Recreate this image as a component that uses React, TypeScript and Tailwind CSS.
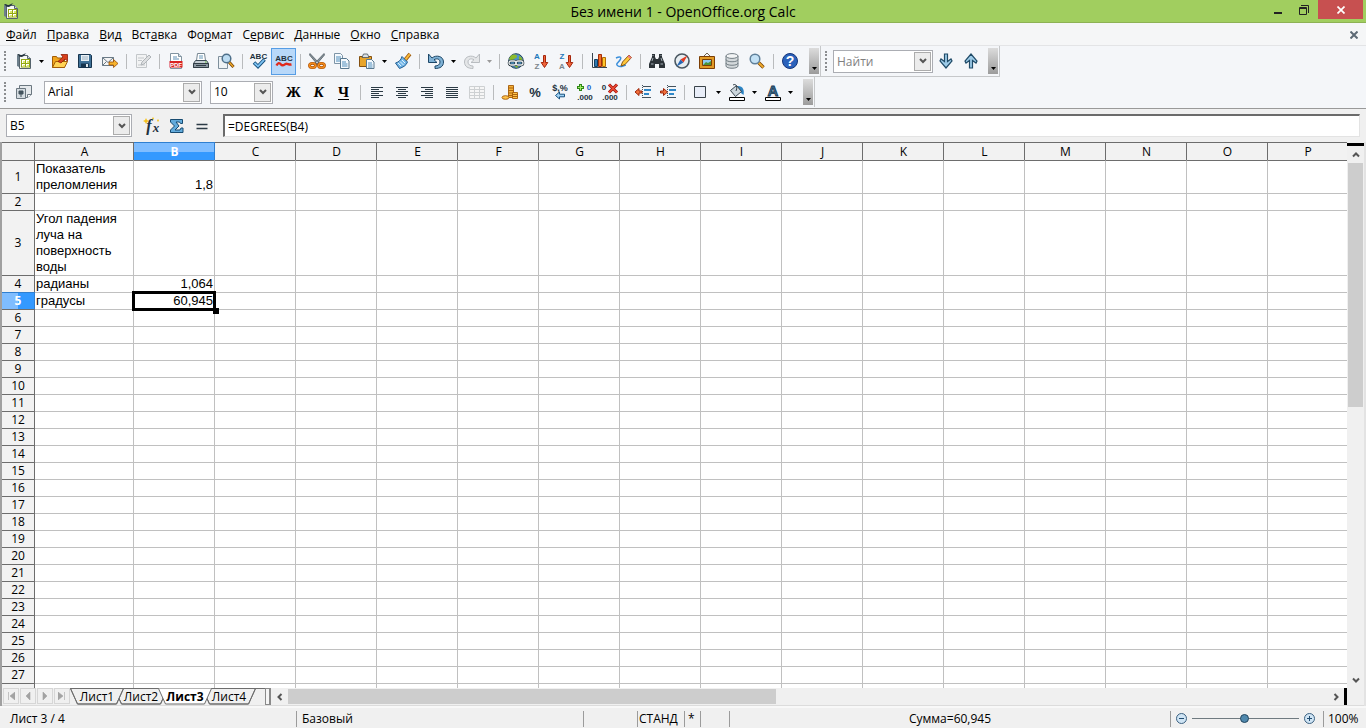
import React from 'react';

interface IconProps {
  children: React.ReactNode;
  size?: number;
}

const Icon: React.FC<IconProps> = ({ children, size = 16 }) => (
  <svg
    width={size}
    height={size}
    viewBox="0 0 16 16"
    fill="none"
    className="shrink-0 overflow-visible font-['Liberation_Sans',sans-serif]"
    aria-hidden="true"
  >
    {children}
  </svg>
);

const CalcIcon = () => (
  <Icon>
    <path d="M1 2l2 .5V14l-2-1z" fill="#6d7f8b" />
    <path d="M3.500 2.500h8l3 3v10h-11z" fill="#f7f9f4" stroke="#55636c" />
    <path d="M11.500 2.500v3h3" fill="#cfd8dc" stroke="#55636c" />
    <path d="M1 1.500c1.500-1.500 3 .5 4.500.5S8 0 10.500.5C8.500 1 8 4 5.500 4S3 2.500 1 1.500z" fill="#24343f" />
    <path d="M5 6h9v8.500H5z" fill="#93a814" />
    <path d="M6 7h3v3H6zM10 7h3v3h-3zM6 11h3v2.500H6zM10 11h3v2.500h-3z" fill="#fff" />
    <path d="M7 8h2v2H7zM11 8h2v2h-2zM7 12h2v1.500H7zM11 12h2v1.500h-2z" fill="#dbe86a" />
  </Icon>
);

const OpenIcon = () => (
  <Icon>
    <path d="M.5 14.500v-11h4l1 1.500h7v9.500z" fill="#f0a51c" stroke="#a35c06" />
    <path d="M.5 14.500l3-6h12l-3 6z" fill="#ffd354" stroke="#a35c06" />
    <path d="M6 8.500l5-4.500-2-2.500h6.500V8l-2.500-2-4 4z" fill="#d8401c" stroke="#8e1d08" strokeWidth=".8" />
  </Icon>
);

const SaveIcon = () => (
  <Icon>
    <path d="M1.500 1.500h12l1 1v12h-13z" fill="#3f7197" stroke="#16344e" />
    <path d="M4 2h8v6H4z" fill="#e9f0f5" />
    <path d="M5 4h6M5 6h6" stroke="#9db2c2" />
    <path d="M4 10.500h8V14H4z" fill="#16344e" />
    <path d="M9 11h2v3H9z" fill="#dfe8ee" />
  </Icon>
);

const MailIcon = () => (
  <Icon>
    <path d="M.5 4.500h11v8H.5z" fill="#f4f4f4" stroke="#6a7a86" />
    <path d="M.5 4.500L6 9.500l5.500-5M.5 12.500l4-4M11.500 12.500l-4-4" stroke="#6a7a86" />
    <path d="M7 9h4.500V6.500L16 10.500l-4.500 4V12H7z" fill="#f7b42c" stroke="#9c4d05" strokeWidth=".8" />
  </Icon>
);

const EditIcon = () => (
  <Icon>
    <path d="M1.500 1.500h10v13h-10z" fill="#f2f3f4" stroke="#c3c7ca" />
    <path d="M3 5h6M3 7.500h4M3 12h7" stroke="#c3c7ca" />
    <path d="M14 2l2 2-7 7-3 1 1-3z" fill="#dddfe1" stroke="#afb4b8" />
  </Icon>
);

const PdfIcon = () => (
  <Icon>
    <path d="M2.500.5h8l3 3v12h-11z" fill="#fff" stroke="#8294a1" />
    <path d="M10.500.5v3h3" fill="#d4e2ec" stroke="#8294a1" />
    <path d="M5 4h4M5 6h6" stroke="#5e8fb5" />
    <path d="M1.500 8h13v6.500h-13z" fill="#d92222" />
    <text x="8" y="13.500" textAnchor="middle" fontSize="6" fontWeight="700" fill="#fff">PDF</text>
  </Icon>
);

const PrintIcon = () => (
  <Icon>
    <path d="M4.500.5h7l1 7h-9z" fill="#fff" stroke="#778793" />
    <path d="M6 3h4M6 5h4" stroke="#6697b8" />
    <path d="M2.500 7.500h11l2 3v4H.5v-4z" fill="#c6ced4" stroke="#3c4a54" />
    <path d="M.5 10.500h15v4H.5z" fill="#8a969f" stroke="#303c45" />
    <path d="M3 12.500h10" stroke="#303c45" />
    <path d="M12 9h1.500" stroke="#5dbf2f" />
  </Icon>
);

const PreviewIcon = () => (
  <Icon>
    <path d="M.5 3.500h9v12h-9z" fill="#eef2f5" stroke="#7e8f9c" />
    <path d="M11 9l4.500 5" stroke="#6d3c06" strokeWidth="3" />
    <path d="M11 9l4.300 4.800" stroke="#efa929" strokeWidth="1.500" />
    <circle cx="8.500" cy="5.500" r="4.300" fill="#bcdcf2" stroke="#4e6f8a" strokeWidth="1.500" />
  </Icon>
);

const SpellIcon = () => (
  <Icon>
    <text x="7.500" y="6" textAnchor="middle" fontSize="8" fontWeight="700" fill="#22313d">ABC</text>
    <path d="M3 9.500l4 4 6.500-7" stroke="#17517f" strokeWidth="3.600" />
    <path d="M3.500 10l3.500 3.300 6-6.500" stroke="#7ec3f3" strokeWidth="1.800" />
  </Icon>
);

const AutoSpellIcon = () => (
  <Icon>
    <text x="8" y="7.500" textAnchor="middle" fontSize="8" fontWeight="700" fill="#22313d">ABC</text>
    <path d="M.5 12.500c1.500-3 3-3 4.500-1s3 .5 4.500-.5 3 1 6 .5" stroke="#e02a1c" strokeWidth="2.400" />
  </Icon>
);

const CutIcon = () => (
  <Icon>
    <path d="M1 .5l10 10.500-2 1L.5 2zM15 .5L5 11l2 1L15.500 2z" fill="#87929a" stroke="#46515a" strokeWidth=".7" />
    <ellipse cx="3.500" cy="12.500" rx="3" ry="2.200" stroke="#a84c04" strokeWidth="2.800" />
    <ellipse cx="12.500" cy="12.500" rx="3" ry="2.200" stroke="#a84c04" strokeWidth="2.800" />
    <ellipse cx="3.500" cy="12.500" rx="3" ry="2.200" stroke="#f28b1b" strokeWidth="1.600" />
    <ellipse cx="12.500" cy="12.500" rx="3" ry="2.200" stroke="#f28b1b" strokeWidth="1.600" />
  </Icon>
);

const CopyIcon = () => (
  <Icon>
    <path d="M.5.5h6l2 2v8h-8z" fill="#f4f9fd" stroke="#7d94a6" />
    <path d="M2 4h5M2 6h5M2 8h5" stroke="#4f8dbb" />
    <path d="M6.500 5.500h6l2.500 2.500v7.500H6.500z" fill="#f4f9fd" stroke="#58788f" />
    <path d="M8 9h4M8 11h5.500M8 13h5.500" stroke="#4f8dbb" />
  </Icon>
);

const PasteIcon = () => (
  <Icon>
    <path d="M.5 3.500h12v10H.5z" fill="#e8a52b" stroke="#845010" />
    <path d="M3 4.500h7L8.500 1h-4z" fill="#dbe1e5" stroke="#4a545c" strokeWidth=".8" />
    <path d="M7.500 6.500h5l2.500 2.500v6.500H7.500z" fill="#f4f9fd" stroke="#58788f" />
    <path d="M9 10h4M9 12h4.500M9 14h4.500" stroke="#4f8dbb" />
  </Icon>
);

const BrushIcon = () => (
  <Icon>
    <path d="M10 7l5-6" stroke="#99560c" strokeWidth="3.600" />
    <path d="M10 7l4.800-5.800" stroke="#f8b83a" strokeWidth="2" />
    <path d="M7 3.500l5.500 5.500C11 13 8 14 4.500 15.500L.5 10C4 9 6 7 7 3.500z" fill="#72b5e6" stroke="#235e91" />
    <path d="M3 10l3 3M5 8.500l3.500 3.500M7 7l3 3" stroke="#e4f3fc" />
  </Icon>
);

const UndoIcon = () => (
  <Icon>
    <path d="M.5 1v8.500H9L6 6.700c3-1.700 6-.7 6 2.300 0 2.500-2 4-5 4v2.500c5 0 8.500-2 8.500-6.500 0-6-7.500-7.500-11.500-4z" fill="#7fb2d6" stroke="#1d4768" />
  </Icon>
);

const RedoIcon = () => (
  <Icon>
    <path d="M15.500 1v8.500H7L10 6.700C7 5 4 6 4 9c0 2.500 2 4 5 4v2.500C4 15.500.5 13.500.5 9c0-6 7.500-7.500 11.500-4z" fill="#e4e6e8" stroke="#b8bcc0" />
  </Icon>
);

const LinkIcon = () => (
  <Icon>
    <circle cx="8" cy="8" r="7.300" fill="#4f94c6" stroke="#25445b" />
    <path d="M3 2.500c3-2 6-1 6 1S6 5 5 7 2 7 1 6zM11 3c3 1 4 4 3 6l-3-2zM5 12h6l-2 3z" fill="#8cbb2b" />
    <rect x="1" y="8" width="7" height="4" rx="2" stroke="#243038" strokeWidth="2.600" />
    <rect x="8" y="8" width="7" height="4" rx="2" stroke="#243038" strokeWidth="2.600" />
    <rect x="1" y="8" width="7" height="4" rx="2" stroke="#e9eef1" strokeWidth="1.300" />
    <rect x="8" y="8" width="7" height="4" rx="2" stroke="#e9eef1" strokeWidth="1.300" />
  </Icon>
);

const SortIcon: React.FC<{ top: string; bottom: string }> = ({ top, bottom }) => (
  <Icon>
    <text x="4" y="6" textAnchor="middle" fontSize="8" fontWeight="700" fill="#1e78ba">{top}</text>
    <text x="4" y="16" textAnchor="middle" fontSize="8" fontWeight="700" fill="#7b858c">{bottom}</text>
    <path d="M10.500 2.500h2v7h2.300l-3.300 5-3.300-5h2.300z" fill="#f0643a" stroke="#a5260c" />
  </Icon>
);

const ChartIcon = () => (
  <Icon>
    <path d="M1.500 0v14.500H16" stroke="#37444e" />
    <path d="M3.500 6.500h3v7h-3z" fill="#2f79ae" stroke="#143f63" />
    <path d="M7.500 1.500h3v12h-3z" fill="#f2702b" stroke="#a42d09" />
    <path d="M11.500 4.500h3v9h-3z" fill="#ffc62b" stroke="#b26a08" />
  </Icon>
);

const DrawIcon = () => (
  <Icon>
    <path d="M0 5c4-2 6-1 4 2s-5 4-2 6 6-1 8-1" stroke="#3b8fdb" strokeWidth="1.500" />
    <path d="M13 2l2.500 2.500-6.500 7-4 1.500 1.500-4z" fill="#ffc73a" stroke="#8b5710" />
    <path d="M13 2l2.500 2.500-1.500 1.500L11.500 3.500z" fill="#f07a80" />
  </Icon>
);

const FindIcon = () => (
  <Icon>
    <path d="M3 1h3v3l1 2h2l1-2V1h3v3l3 7v4h-6v-4H6v4H0v-4l3-7z" fill="#2c3338" />
    <path d="M2 11h2.500M11.500 11H14M4 5l-1 3M12 5l1 3M4 2v1M12 2v1" stroke="#a4afb6" />
  </Icon>
);

const CompassIcon = () => (
  <Icon>
    <circle cx="8" cy="8" r="7" fill="#e7edf1" stroke="#4a5761" strokeWidth="1.600" />
    <path d="M13.500 2.500L9.500 9.500 6.500 6.500z" fill="#e33b22" />
    <path d="M2.500 13.500l4-7 3 3z" fill="#2867b2" />
  </Icon>
);

const GalleryIcon = () => (
  <Icon>
    <path d="M5 3l3-3 3 3" stroke="#6f6250" />
    <path d="M.5 3.500h15v12H.5z" fill="#e19a25" stroke="#7c3e05" />
    <path d="M3.500 6.500h9v6h-9z" fill="#8ecbf0" stroke="#7c3e05" />
    <path d="M4 12l3-3 2 1 3-2v4z" fill="#4c9436" />
  </Icon>
);

const DatabaseIcon = () => (
  <Icon>
    <path d="M2 3v10c0 3 12 3 12 0V3z" fill="#d3d8db" stroke="#737e85" />
    <path d="M2 6.500c0 3 12 3 12 0M2 10c0 3 12 3 12 0" stroke="#737e85" />
    <ellipse cx="8" cy="3" rx="6" ry="2.400" fill="#f2f4f5" stroke="#737e85" />
  </Icon>
);

const ZoomIcon = () => (
  <Icon>
    <path d="M9.500 9.500l5 5" stroke="#7b4507" strokeWidth="3.400" />
    <path d="M9.500 9.500l4.800 4.800" stroke="#f3ae2e" strokeWidth="1.800" />
    <circle cx="6" cy="6" r="4.800" fill="#c3e1f5" stroke="#5f7f99" strokeWidth="1.500" />
  </Icon>
);

const HelpIcon = () => (
  <Icon>
    <circle cx="8" cy="8" r="7.500" fill="#2b62bb" stroke="#14357b" />
    <text x="8" y="13" textAnchor="middle" fontSize="14" fontWeight="700" fill="#fff">?</text>
  </Icon>
);

const ArrowIcon: React.FC<{ up?: boolean }> = ({ up }) => (
  <Icon>
    <path
      d={up ? 'M6.500 15V7.500L3 10l-1-2 6-7 6 7-1 2-3.500-2.500V15z' : 'M6.500 1v7.500L3 6 2 8l6 7 6-7-1-2-3.500 2.500V1z'}
      fill="#9dcbe8"
      stroke="#204b68"
      strokeWidth="1.200"
    />
  </Icon>
);

const StylesIcon = () => (
  <Icon>
    <path d="M3.500 1.500h12v9l-4 3h-8z" fill="#e5e9ec" stroke="#6b7780" />
    <path d="M11.500 13.500v-3h4" fill="#fff" stroke="#6b7780" />
    <path d="M.5 4.500h9v10h-9z" fill="#d5dce1" stroke="#6b7780" />
    <path d="M3 7h4v3H3zM5 10v3" fill="#43525d" stroke="#43525d" />
  </Icon>
);

const LetterIcon: React.FC<{ letter: string; italic?: boolean; underline?: boolean }> = ({ letter, italic, underline }) => (
  <span
    className={`font-['Liberation_Serif',serif] text-[15px] leading-4 font-bold ${italic ? 'italic' : ''} ${underline ? 'underline underline-offset-2' : ''}`}
  >
    {letter}
  </span>
);

const AlignIcon: React.FC<{ d: string }> = ({ d }) => (
  <Icon>
    <path d={d} stroke="#2b3a45" />
  </Icon>
);

const TableIcon = () => (
  <Icon>
    <path d="M.5 2.500h15v12H.5zM.5 5.500h15M.5 8.500h15M.5 11.500h15M5.500 2.500v12M10.500 2.500v12" fill="#f6f6f6" stroke="#cdd0d2" />
  </Icon>
);

const MoneyIcon = () => (
  <Icon>
    <path d="M6.500 1.500h5v12h-5zM6.500 4h5M6.500 6.500h5M6.500 9h5M6.500 11.500h5" fill="#f5b23a" stroke="#a35a08" strokeWidth=".9" />
    <path d="M10.500 8.500h5v6h-5zM10.500 10.500h5M10.500 12.500h5" fill="#ffc34a" stroke="#a35a08" strokeWidth=".9" />
    <ellipse cx="3.500" cy="13.500" rx="3.500" ry="1.800" fill="#ffc34a" stroke="#a35a08" strokeWidth=".9" />
  </Icon>
);

const PercentIcon = () => (
  <Icon>
    <text x="8" y="12.500" textAnchor="middle" fontSize="13" fontWeight="600" fill="#22313d">%</text>
  </Icon>
);

const StandardIcon = () => (
  <Icon>
    <text x="8" y="7" textAnchor="middle" fontSize="9" fontWeight="700" fill="#22313d">$,%</text>
    <path d="M3.500 11.500l4-3.500v2.200h5v2.600h-5V15z" fill="#9fd2f5" stroke="#17517f" />
  </Icon>
);

const AddDecimalIcon = () => (
  <Icon>
    <path d="M3.500 0v7M0 3.500h7" stroke="#2d8716" strokeWidth="3" />
    <path d="M3.500 1v5M1 3.500h5" stroke="#a5ec6a" />
    <text x="12" y="6" textAnchor="middle" fontSize="8" fontWeight="700" fill="#2160c9">0</text>
    <text x="8" y="16" textAnchor="middle" fontSize="8" fontWeight="700" fill="#22313d">.000</text>
  </Icon>
);

const RemoveDecimalIcon = () => (
  <Icon>
    <text x="2" y="6" textAnchor="middle" fontSize="8" fontWeight="700" fill="#22313d">0</text>
    <text x="8" y="16" textAnchor="middle" fontSize="8" fontWeight="700" fill="#22313d">.000</text>
    <path d="M7 .5l8 8M15 .5l-8 8" stroke="#9d1208" strokeWidth="3" />
    <path d="M7 .5l8 8M15 .5l-8 8" stroke="#ee4a35" strokeWidth="1.500" />
  </Icon>
);

const IndentIcon: React.FC<{ right?: boolean }> = ({ right }) => (
  <Icon>
    <path d="M8 2.500h8M8 13.500h8" stroke="#43525d" />
    <path d="M9 6h7M9 10h5" stroke="#2f88c9" strokeWidth="2" />
    <path d="M7.500 1v14" stroke="#43525d" strokeDasharray="1 1" />
    <path
      d={right ? 'M7.500 8L3.500 4.500V7H.5v2h3v2.500z' : 'M0 8l4-3.500V7h3v2H4v2.500z'}
      fill="#f2703c"
      stroke="#9d260a"
    />
  </Icon>
);

const BorderIcon = () => (
  <Icon>
    <path d="M1.500 2.500h11v11h-11z" fill="#e8edf8" stroke="#3a434a" />
  </Icon>
);

const FillIcon = () => (
  <Icon>
    <path d="M8 2c6-.5 7.500 4 6.500 9L12 9z" fill="#2c84c4" />
    <path d="M1.500 6.500l6-5 5 6-6 5z" fill="#ccd6dc" stroke="#37444e" />
    <path d="M4 1c3-2 5 2 3 6" stroke="#37444e" />
    <path d="M.5 13.500h15v3H.5z" fill="#fff" stroke="#000" />
  </Icon>
);

const FontColorIcon = () => (
  <Icon>
    <text x="8" y="11.500" textAnchor="middle" fontSize="15" fontWeight="700" fill="#3d7096" stroke="#17364e" strokeWidth=".8">A</text>
    <path d="M.5 13.500h15v3H.5z" fill="#fff" stroke="#000" />
  </Icon>
);

const FxIcon = () => (
  <Icon>
    <path d="M2 0l1 2 2 1-2 1-1 2-1-2-2-1 2-1zM9-1l1 1.500L9 2 8 .5zM14 1l1 1.500L14 4l-1-1.500z" fill="#f6c21c" />
    <text x="5" y="13" textAnchor="middle" fontSize="16" fontStyle="italic" fontWeight="700" fontFamily="Liberation Serif, serif" fill="#22313d">f</text>
    <text x="12" y="14" textAnchor="middle" fontSize="13" fontStyle="italic" fontWeight="700" fontFamily="Liberation Serif, serif" fill="#22313d">x</text>
  </Icon>
);

const SumIcon = () => (
  <Icon>
    <path d="M1.500 1.500h12v4h-2l-1-1.500H7L10 8l-4 4h5l1-2h2v4.500H1.500V12l4-4-4-4z" fill="#62abdc" stroke="#174a70" />
  </Icon>
);

const EqualsIcon = () => (
  <Icon>
    <path d="M2.500 6.500h11M2.500 10.500h11" stroke="#2b3a45" strokeWidth="1.500" />
  </Icon>
);

const ToolButton: React.FC<{ label: string; active?: boolean; children: React.ReactNode }> = ({ label, active, children }) => (
  <button
    type="button"
    aria-label={label}
    className={`flex h-[27px] w-[25px] shrink-0 items-center justify-center ${active ? 'border border-[#569de5] bg-[#b8d8f9]' : ''}`}
  >
    {children}
  </button>
);

const MenuArrow: React.FC<{ label: string; disabled?: boolean }> = ({ label, disabled }) => (
  <button type="button" aria-label={label} className="flex h-[27px] w-[11px] shrink-0 items-center justify-center">
    <svg width="5" height="3" viewBox="0 0 5 3" className={disabled ? 'fill-[#9a9a9a]' : 'fill-black'}>
      <path d="M0 0h5L2.500 3z" />
    </svg>
  </button>
);

const Separator = () => (
  <div className="flex w-2 shrink-0 justify-center">
    <div className="h-[15px] w-px bg-[#b9bbbd]" />
  </div>
);

const Handle = () => <div className="mr-[5px] ml-1 h-5 w-0 shrink-0 border-l-2 border-dotted border-[#8b8d90]" />;

const Overflow = () => (
  <button
    type="button"
    aria-label="Параметры панели"
    className="flex h-[26px] w-[10px] shrink-0 items-end justify-center bg-gradient-to-b from-[#dcdcdc] to-[#9c9c9c] pb-1"
  >
    <svg width="5" height="3" viewBox="0 0 5 3" className="fill-black">
      <path d="M0 0h5L2.500 3z" />
    </svg>
  </button>
);

const DropBox = () => (
  <div className="pointer-events-none absolute top-[2px] right-[2px] flex h-[19px] w-[17px] items-center justify-center border border-[#acacac] bg-[#ececec]">
    <svg width="8" height="6" viewBox="0 0 8 6" fill="none">
      <path d="M1 1l3 3 3-3" stroke="#555" strokeWidth="2" />
    </svg>
  </div>
);

interface ComboProps {
  label: string;
  value: string;
  className: string;
}

const Combo: React.FC<ComboProps> = ({ label, value, className }) => (
  <div className={`relative h-[23px] shrink-0 ${className}`}>
    <select
      aria-label={label}
      defaultValue={value}
      className="block h-full w-full appearance-none border border-[#abadb3] bg-white pl-[3px] text-[12px] leading-4 outline-none"
    >
      <option>{value}</option>
    </select>
    <DropBox />
  </div>
);

const MENU = [
  ['', 'Ф', 'айл'],
  ['', 'П', 'равка'],
  ['', 'В', 'ид'],
  ['Вст', 'а', 'вка'],
  ['Фо', 'р', 'мат'],
  ['С', 'е', 'рвис'],
  ['', 'Д', 'анные'],
  ['', 'О', 'кно'],
  ['', 'С', 'правка'],
];

const COLUMNS = 'ABCDEFGHIJKLMNOP'.split('');

const CELLS: Record<string, string> = {
  A1: 'Показатель преломления',
  B1: '1,8',
  A3: 'Угол падения луча на поверхность воды',
  A4: 'радианы',
  B4: '1,064',
  A5: 'градусы',
  B5: '60,945',
};

const SHEETS = ['Лист1', 'Лист2', 'Лист3', 'Лист4'];

const TitleBar = () => (
  <header className="relative flex h-[23px] items-start justify-between border-b border-[#8db254] bg-[#a1ce5f] pr-[3px] pl-[3px]">
    <div className="pt-[3px]">
      <CalcIcon />
    </div>
    <h1 className="absolute inset-x-40 top-[2px] text-center text-[14px] leading-5 text-black">
      Без имени 1 - OpenOffice.org Calc
    </h1>
    <div className="flex">
      <button type="button" aria-label="Свернуть" className="flex h-[19px] w-6 items-center justify-center">
        <svg width="8" height="16" viewBox="0 0 8 16">
          <path d="M0 10h8v2H0z" fill="#222" />
        </svg>
      </button>
      <button type="button" aria-label="Восстановить" className="flex h-[19px] w-7 items-center justify-center">
        <svg width="10" height="10" viewBox="0 0 10 10" fill="none">
          <path d="M.5 2.500h7v7h-7zM.5 3.500h7M2 .5h7.500V8" stroke="#222" />
        </svg>
      </button>
      <button type="button" aria-label="Закрыть" className="flex h-[19px] w-[45px] items-center justify-center bg-[#c75050]">
        <svg width="8" height="8" viewBox="0 0 8 8">
          <path d="M.5.5l7 7M7.500.5l-7 7" stroke="#fff" strokeWidth="1.700" />
        </svg>
      </button>
    </div>
  </header>
);

const MenuBar = () => (
  <nav className="flex h-[23px] items-center justify-between border-b border-[#e3e4e6] bg-[#f5f6f7] pt-px pr-2 pl-[6px]">
    <div className="flex gap-[10px]">
      {MENU.map(([before, key, after]) => (
        <button key={before + key + after} type="button" className="text-[12px] leading-4">
          {before}
          <span className="underline">{key}</span>
          {after}
        </button>
      ))}
    </div>
    <button type="button" aria-label="Закрыть документ">
      <svg width="8" height="8" viewBox="0 0 8 8">
        <path d="M.5.5l7 7M7.500.5l-7 7" stroke="#5d6a75" strokeWidth="2" />
      </svg>
    </button>
  </nav>
);

const StandardToolbar = () => (
  <div className="flex">
    <div className="flex h-[31px] items-center border-r border-b border-[#c6c8ca]">
      <Handle />
      <ToolButton label="Создать"><CalcIcon /></ToolButton>
      <MenuArrow label="Создать, список" />
      <ToolButton label="Открыть"><OpenIcon /></ToolButton>
      <ToolButton label="Сохранить"><SaveIcon /></ToolButton>
      <ToolButton label="Отправить"><MailIcon /></ToolButton>
      <Separator />
      <ToolButton label="Режим правки"><EditIcon /></ToolButton>
      <Separator />
      <ToolButton label="Экспорт в PDF"><PdfIcon /></ToolButton>
      <ToolButton label="Печать"><PrintIcon /></ToolButton>
      <ToolButton label="Предварительный просмотр"><PreviewIcon /></ToolButton>
      <Separator />
      <ToolButton label="Проверка орфографии"><SpellIcon /></ToolButton>
      <ToolButton label="Автопроверка" active><AutoSpellIcon /></ToolButton>
      <Separator />
      <ToolButton label="Вырезать"><CutIcon /></ToolButton>
      <ToolButton label="Копировать"><CopyIcon /></ToolButton>
      <ToolButton label="Вставить"><PasteIcon /></ToolButton>
      <MenuArrow label="Вставить, список" />
      <ToolButton label="Копировать формат"><BrushIcon /></ToolButton>
      <Separator />
      <ToolButton label="Отменить"><UndoIcon /></ToolButton>
      <MenuArrow label="Отменить, список" />
      <ToolButton label="Вернуть"><RedoIcon /></ToolButton>
      <MenuArrow label="Вернуть, список" disabled />
      <Separator />
      <ToolButton label="Гиперссылка"><LinkIcon /></ToolButton>
      <ToolButton label="По возрастанию"><SortIcon top="A" bottom="Z" /></ToolButton>
      <ToolButton label="По убыванию"><SortIcon top="Z" bottom="A" /></ToolButton>
      <Separator />
      <ToolButton label="Диаграмма"><ChartIcon /></ToolButton>
      <ToolButton label="Рисование"><DrawIcon /></ToolButton>
      <Separator />
      <ToolButton label="Найти и заменить"><FindIcon /></ToolButton>
      <ToolButton label="Навигатор"><CompassIcon /></ToolButton>
      <ToolButton label="Галерея"><GalleryIcon /></ToolButton>
      <ToolButton label="Источники данных"><DatabaseIcon /></ToolButton>
      <ToolButton label="Масштаб"><ZoomIcon /></ToolButton>
      <Separator />
      <ToolButton label="Справка"><HelpIcon /></ToolButton>
      <div className="ml-[7px] pr-px">
        <Overflow />
      </div>
    </div>
    <div className="flex h-[31px] items-center border-r border-b border-[#c6c8ca]">
      <Handle />
      <div className="relative ml-px h-[23px] w-[100px]">
        <input
          aria-label="Найти"
          placeholder="Найти"
          className="block h-full w-full border border-[#abadb3] bg-white px-[3px] text-[12px] leading-4 outline-none placeholder:text-[#7f7f7f]"
        />
        <DropBox />
      </div>
      <ToolButton label="Найти далее"><ArrowIcon /></ToolButton>
      <ToolButton label="Найти ранее"><ArrowIcon up /></ToolButton>
      <div className="ml-[5px] pr-px">
        <Overflow />
      </div>
    </div>
  </div>
);

const FormatToolbar = () => (
  <div className="flex">
    <div className="flex h-[30px] items-center border-r border-[#c6c8ca]">
      <Handle />
      <ToolButton label="Стили"><StylesIcon /></ToolButton>
      <Combo label="Шрифт" value="Arial" className="ml-2 w-[158px]" />
      <Combo label="Размер" value="10" className="mr-2 ml-2 w-[63px]" />
      <ToolButton label="Полужирный"><LetterIcon letter="Ж" /></ToolButton>
      <ToolButton label="Курсив"><LetterIcon letter="К" italic /></ToolButton>
      <ToolButton label="Подчёркнутый"><LetterIcon letter="Ч" underline /></ToolButton>
      <Separator />
      <ToolButton label="По левому краю"><AlignIcon d="M2 3.500h12M2 5.500h8M2 7.500h12M2 9.500h8M2 11.500h12M2 13.500h8" /></ToolButton>
      <ToolButton label="По центру"><AlignIcon d="M2 3.500h12M4 5.500h8M2 7.500h12M4 9.500h8M2 11.500h12M4 13.500h8" /></ToolButton>
      <ToolButton label="По правому краю"><AlignIcon d="M2 3.500h12M6 5.500h8M2 7.500h12M6 9.500h8M2 11.500h12M6 13.500h8" /></ToolButton>
      <ToolButton label="По ширине"><AlignIcon d="M2 3.500h12M2 5.500h12M2 7.500h12M2 9.500h12M2 11.500h12M2 13.500h12" /></ToolButton>
      <ToolButton label="Объединить ячейки"><TableIcon /></ToolButton>
      <Separator />
      <ToolButton label="Денежный формат"><MoneyIcon /></ToolButton>
      <ToolButton label="Процентный формат"><PercentIcon /></ToolButton>
      <ToolButton label="Стандартный формат"><StandardIcon /></ToolButton>
      <ToolButton label="Добавить разряд"><AddDecimalIcon /></ToolButton>
      <ToolButton label="Удалить разряд"><RemoveDecimalIcon /></ToolButton>
      <Separator />
      <ToolButton label="Уменьшить отступ"><IndentIcon /></ToolButton>
      <ToolButton label="Увеличить отступ"><IndentIcon right /></ToolButton>
      <Separator />
      <ToolButton label="Обрамление"><BorderIcon /></ToolButton>
      <MenuArrow label="Обрамление, список" />
      <ToolButton label="Цвет фона"><FillIcon /></ToolButton>
      <MenuArrow label="Цвет фона, список" />
      <ToolButton label="Цвет шрифта"><FontColorIcon /></ToolButton>
      <MenuArrow label="Цвет шрифта, список" />
      <div className="ml-[7px] pr-px">
        <Overflow />
      </div>
    </div>
  </div>
);

const FormulaBar = () => (
  <div className="flex h-[34px] items-center border-t border-[#999] bg-[#f0f0f0] pr-[6px] pl-[6px]">
    <Combo label="Область листа" value="B5" className="w-[126px]" />
    <div className="ml-[7px] flex">
      <ToolButton label="Мастер функций"><FxIcon /></ToolButton>
      <ToolButton label="Сумма"><SumIcon /></ToolButton>
      <ToolButton label="Функция"><EqualsIcon /></ToolButton>
    </div>
    <input
      aria-label="Строка ввода"
      defaultValue="=DEGREES(B4)"
      className="ml-[9px] block h-[23px] min-w-0 flex-1 border-t-2 border-r border-b border-l-2 border-t-[#6b6b6b] border-r-[#e3e3e3] border-b-[#e3e3e3] border-l-[#6b6b6b] bg-white px-[3px] text-[12px] leading-4 outline-none"
    />
  </div>
);

const rowHeight = (row: number) => {
  if (row === 1) return 'h-[33px]';
  if (row === 3) return 'h-[65px]';
  return 'h-[17px]';
};

const Sheet = () => (
  <div className="min-w-0 flex-1 overflow-hidden bg-white">
    <table className="w-full table-fixed border-separate border-spacing-0">
      <colgroup>
        <col className="w-[33px]" />
        {COLUMNS.map((col) => (
          <col key={col} className={col === 'A' ? 'w-[99px]' : col === 'P' ? '' : 'w-[81px]'} />
        ))}
      </colgroup>
      <thead>
        <tr className="h-[18px]">
          <th className="border-t border-r border-[#6d6d6d] bg-[#f2f2f2]" />
          {COLUMNS.map((col) => (
            <th
              key={col}
              scope="col"
              className={`border-t py-0 pr-0 pl-px text-center text-[12px] leading-4 ${
                col === 'B'
                  ? 'border-[#2f7fd0] bg-gradient-to-b from-[#7fbdff] from-50% to-[#3399ff] to-50% font-bold text-white'
                  : 'border-[#6d6d6d] bg-[#f2f2f2] font-normal text-black'
              } ${col === 'P' ? '' : 'border-r'}`}
            >
              {col}
            </th>
          ))}
        </tr>
      </thead>
      <tbody>
        {Array.from({ length: 27 }, (_, i) => i + 1).map((row) => (
          <tr key={row} className={rowHeight(row)}>
            <th
              scope="row"
              className={`border-t border-r p-0 text-center text-[12px] leading-4 ${
                row === 5
                  ? 'border-[#2f7fd0] bg-gradient-to-r from-[#7fbdff] from-50% to-[#3399ff] to-50% font-bold text-white'
                  : 'border-[#6d6d6d] bg-[#f2f2f2] font-normal text-black'
              }`}
            >
              {row}
            </th>
            {COLUMNS.map((col) => {
              const id = `${col}${row}`;
              return (
                <td
                  key={col}
                  className={`relative border-t border-[#c0c0c0] p-0 px-px align-bottom font-['Liberation_Sans',sans-serif] text-[13px] leading-4 ${
                    row === 1 ? 'border-t-[#6d6d6d]' : ''
                  } ${col === 'P' ? '' : 'border-r'} ${col === 'B' ? 'text-right' : 'text-left'}`}
                >
                  {CELLS[id]}
                  {id === 'B5' && (
                    <div className="absolute -inset-[2px] z-10 border-[3px] border-black">
                      <div className="absolute -right-[6px] -bottom-[6px] h-[6px] w-[6px] bg-black" />
                    </div>
                  )}
                </td>
              );
            })}
          </tr>
        ))}
        <tr className="h-[5px]">
          <th className="border-t border-r border-[#6d6d6d] bg-[#f2f2f2] p-0" />
          {COLUMNS.map((col) => (
            <td key={col} className={`border-t border-[#c0c0c0] p-0 ${col === 'P' ? '' : 'border-r'}`} />
          ))}
        </tr>
      </tbody>
    </table>
  </div>
);

const Chevron: React.FC<{ d: string }> = ({ d }) => (
  <svg width="8" height="8" viewBox="0 0 8 8" fill="none">
    <path d={d} stroke="#555" strokeWidth="2" />
  </svg>
);

const VerticalScroll = () => (
  <div className="flex w-[17px] shrink-0 flex-col items-center bg-[#f0f0f0] pt-px">
    <div className="h-[3px] w-full shrink-0 bg-black" />
    <button type="button" aria-label="Вверх" className="flex h-[17px] w-full shrink-0 items-center justify-center">
      <Chevron d="M1 5.500l3-3 3 3" />
    </button>
    <div className="w-[15px] grow-[48] bg-[#cdcdcd]" />
    <div className="grow-[52]" />
    <button type="button" aria-label="Вниз" className="flex h-[17px] w-full shrink-0 items-center justify-center">
      <Chevron d="M1 2.500l3 3 3-3" />
    </button>
  </div>
);

const NAV_ICONS = [
  { label: 'Первый лист', d: 'M1.500 0v8M8 0v8L3 4z' },
  { label: 'Предыдущий лист', d: 'M6 0v8L2 4z' },
  { label: 'Следующий лист', d: 'M2 0v8l4-4z' },
  { label: 'Последний лист', d: 'M0 0v8l5-4zM6.500 0v8' },
];

const SheetTabs = () => (
  <div className="flex h-[18px] border-b border-[#dcdcdc] bg-[#f0f0f0]">
    <div className="flex shrink-0 gap-px pl-px">
      {NAV_ICONS.map(({ label, d }) => (
        <button key={label} type="button" aria-label={label} className="flex h-4 w-4 items-center justify-center border border-[#d6d6d6]">
          <svg width="8" height="8" viewBox="0 0 8 8" fill="#a3a3a3" stroke="#a3a3a3" strokeWidth=".6">
            <path d={d} />
          </svg>
        </button>
      ))}
    </div>
    <div className="flex w-[195px] shrink-0 border-t border-[#6d6d6d]">
      {SHEETS.map((name, i) => {
        const active = name === 'Лист3';
        return (
          <button
            key={name}
            type="button"
            className={`relative h-4 w-[54px] shrink-0 text-[12px] leading-4 ${active ? 'z-20 font-bold' : i === 0 ? 'z-10' : ''} ${i > 0 ? '-ml-[10px]' : ''}`}
          >
            <svg width="54" height="17" viewBox="0 0 54 17" className="absolute -top-px left-0">
              <path d="M.5.5l7 15.500h39L53.500.5z" fill={active ? '#fff' : '#f0f0f0'} stroke={active ? 'none' : '#6d6d6d'} />
              <path d="M.5.5l7 15.500h39L53.500.5" fill="none" stroke="#6d6d6d" />
            </svg>
            <span className="relative">{name}</span>
          </button>
        );
      })}
    </div>
    <div className="h-[17px] w-[6px] shrink-0 border border-r-2 border-[#8a8a8a] bg-[#f5f5f5]" />
    <div className="flex min-w-0 flex-1 items-center">
      <button type="button" aria-label="Влево" className="flex h-4 w-[17px] shrink-0 items-center justify-center">
        <Chevron d="M5.500 1l-3 3 3 3" />
      </button>
      <div className="h-[15px] grow-[47] bg-[#cdcdcd]" />
      <div className="grow-[53]" />
      <button type="button" aria-label="Вправо" className="flex h-4 w-[17px] shrink-0 items-center justify-center">
        <Chevron d="M2.500 1l3 3-3 3" />
      </button>
      <div className="h-[17px] w-[3px] shrink-0 bg-black" />
    </div>
    <div className="w-[17px] shrink-0" />
  </div>
);

const ZoomSlider = () => (
  <div className="flex items-center gap-[5px]">
    <button type="button" aria-label="Уменьшить">
      <svg width="11" height="11" viewBox="0 0 11 11" fill="none">
        <circle cx="5.500" cy="5.500" r="5" fill="#cfe4f4" stroke="#3c6180" />
        <path d="M3 5.500h5" stroke="#1f4b70" />
      </svg>
    </button>
    <input
      type="range"
      aria-label="Масштаб"
      min={0}
      max={100}
      defaultValue={49}
      className="h-4 w-[107px] appearance-none bg-transparent [&::-webkit-slider-runnable-track]:h-px [&::-webkit-slider-runnable-track]:bg-[#6f7a80] [&::-webkit-slider-thumb]:-mt-1 [&::-webkit-slider-thumb]:h-[9px] [&::-webkit-slider-thumb]:w-[9px] [&::-webkit-slider-thumb]:appearance-none [&::-webkit-slider-thumb]:rounded-full [&::-webkit-slider-thumb]:border [&::-webkit-slider-thumb]:border-[#22465f] [&::-webkit-slider-thumb]:bg-[#4f88ad]"
    />
    <button type="button" aria-label="Увеличить">
      <svg width="11" height="11" viewBox="0 0 11 11" fill="none">
        <circle cx="5.500" cy="5.500" r="5" fill="#cfe4f4" stroke="#3c6180" />
        <path d="M3 5.500h5M5.500 3v5" stroke="#1f4b70" />
      </svg>
    </button>
  </div>
);

const StatusBar = () => (
  <footer className="flex h-[22px] items-center border-t-2 border-[#f8f8f8] bg-[#f0f0f0] pt-px text-[12px] leading-4 whitespace-nowrap">
    <div className="w-[296px] pl-[10px]">Лист 3 / 4</div>
    <div className="w-[287px] border-l border-[#9b9b9b] pl-[5px]">Базовый</div>
    <div className="h-4 w-[54px] border-l border-[#9b9b9b]" />
    <div className="w-[47px] border-l border-[#9b9b9b] pl-px">СТАНД</div>
    <div className="w-4 border-l border-[#9b9b9b] pl-[3px]">*</div>
    <div className="h-4 w-[29px] border-l border-[#9b9b9b]" />
    <div className="min-w-0 flex-1 border-l border-[#9b9b9b] text-center">Сумма=60,945</div>
    <div className="flex h-4 w-[153px] items-center border-l border-[#9b9b9b] pl-[5px]">
      <ZoomSlider />
    </div>
    <div className="w-[43px] border-l border-[#9b9b9b] pl-1">100%</div>
  </footer>
);

export default function App() {
  return (
    <div className="flex h-screen min-h-[480px] flex-col overflow-hidden bg-[#f0f0f0] font-['Open_Sans','Noto_Sans',sans-serif] text-black">
      <TitleBar />
      <MenuBar />
      <div className="bg-[#f4f6f9] pb-px">
        <StandardToolbar />
        <FormatToolbar />
      </div>
      <FormulaBar />
      <main className="flex min-h-0 flex-1 flex-col border-r-2 border-l-2 border-[#e3e3e3] border-l-[#a0a0a0]">
        <div className="flex min-h-0 flex-1">
          <Sheet />
          <VerticalScroll />
        </div>
        <SheetTabs />
      </main>
      <StatusBar />
    </div>
  );
}
